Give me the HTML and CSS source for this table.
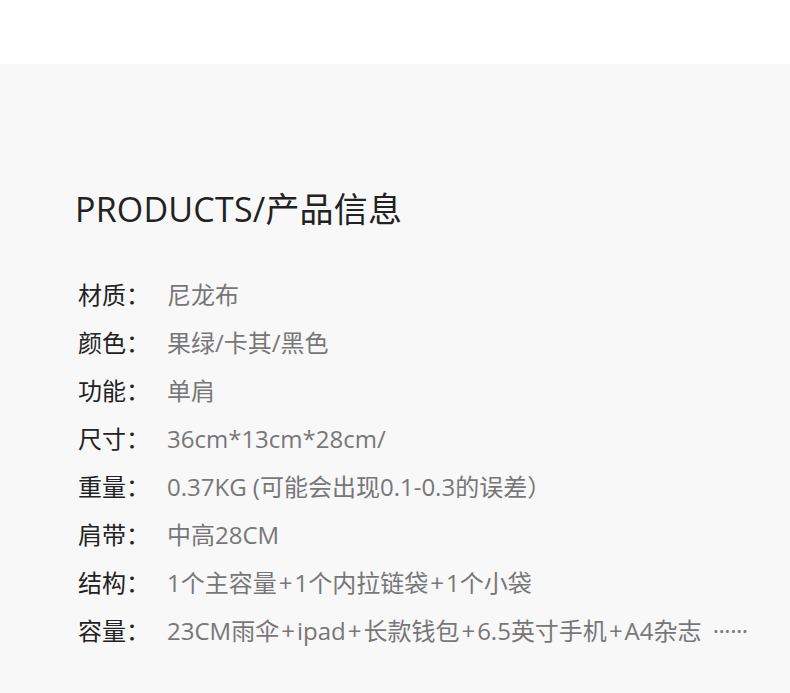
FILE: index.html
```html
<!DOCTYPE html>
<html>
<head>
    <meta charset="utf-8">
    <title>产品信息</title>
    <link rel="stylesheet" href="styles.css">
</head>
<body>
    <div class="topbar"></div>
    <div class="info">
        <h1>PRODUCTS/产品信息</h1>
        <ul class="spec">
            <li><span class="label">材质：</span><span class="value">尼龙布</span></li>
            <li><span class="label">颜色：</span><span class="value">果绿/卡其/黑色</span></li>
            <li><span class="label">功能：</span><span class="value">单肩</span></li>
            <li><span class="label">尺寸：</span><span class="value">36cm*13cm*28cm/</span></li>
            <li><span class="label">重量：</span><span class="value">0.37KG (可能会出现0.1-0.3的误差）</span></li>
            <li><span class="label">肩带：</span><span class="value">中高28CM</span></li>
            <li><span class="label">结构：</span><span class="value">1个主容量<span class="plus">+</span>1个内拉链袋<span class="plus">+</span>1个小袋</span></li>
            <li><span class="label">容量：</span><span class="value">23CM雨伞<span class="plus">+</span>ipad<span class="plus">+</span>长款钱包<span class="plus">+</span>6.5英寸手机<span class="plus">+</span>A4杂志 <span class="dots">······</span></span></li>
        </ul>
    </div>
</body>
</html>
```

FILE: styles.css
```css
body {
    margin: 0;
    padding: 0;
    background-color: #fff;
    font-family: 'Open Sans', 'Noto Sans CJK SC', sans-serif;
}

.topbar {
    height: 64px;
    background-color: #fff;
}

.info {
    box-sizing: border-box;
    min-height: 629px;
    background-color: #f8f8f8;
    padding: 125px 0 0 75px;
}

h1 {
    margin: 0;
    font-size: 34px;
    font-weight: normal;
    line-height: 40px;
    letter-spacing: 0.2px;
    color: #222;
}

.spec {
    list-style: none;
    margin: 42px 0 0 3px;
    padding: 0;
}

.spec li {
    display: flex;
    height: 48px;
    line-height: 48px;
    font-size: 24px;
    white-space: nowrap;
}

.label {
    width: 89px;
    color: #222;
}

.value {
    color: #777;
}

.plus {
    margin: 0 2px;
}

.dots {
    margin-left: 5px;
    letter-spacing: -0.5px;
}
```
